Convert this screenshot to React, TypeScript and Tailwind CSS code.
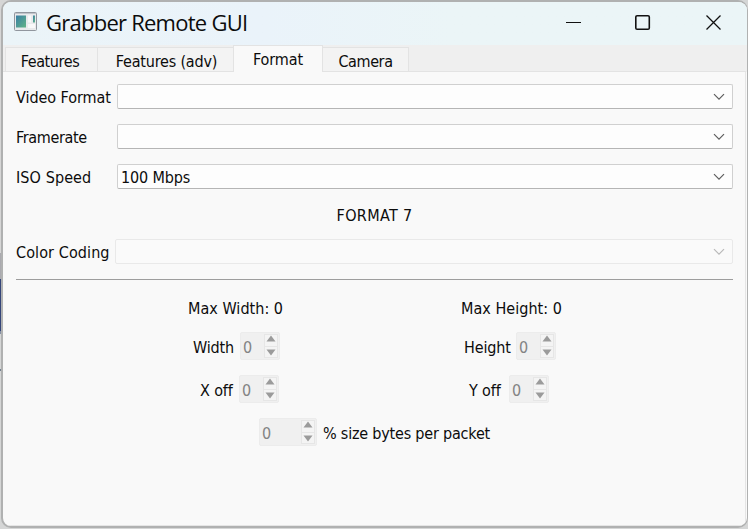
import React from "react";

function Chevron({ dim = false }: { dim?: boolean }) {
  return (
    <svg width="12" height="8" viewBox="0 0 12 8" fill="none" stroke={dim ? "#b9b9b9" : "#5e5e5e"} strokeWidth="1.2">
      <path d="M1 1.2 6 6.2 11 1.2" />
    </svg>
  );
}

function Combo({ label, gap, spacing, value = "", dim = false }: { label: string; gap: string; spacing: string; value?: string; dim?: boolean }) {
  return (
    <div className="flex h-[25px] items-center">
      <span className={`${gap} ${spacing} shrink-0 pt-[2px]`}>{label}</span>
      <div className={`flex h-[25px] flex-1 items-center justify-between rounded-[2px] border pl-[3px] pr-[7px] ${dim ? "border-[#e9e9e9] bg-[#fafafa]" : "border-[#d0d0d0] border-b-[#b5b5b5] bg-[#fdfdfd]"}`}>
        <span className="pt-[2px] tracking-[-0.15px]">{value}</span>
        <Chevron dim={dim} />
      </div>
    </div>
  );
}

function Spin({ width = "w-[40px]" }: { width?: string }) {
  return (
    <div className={`${width} flex h-[28px] shrink-0 items-center justify-between rounded-[2px] border border-[#ececec] bg-[#f0f0f0] pl-[2px] pr-px text-[#838383]`}>
      <span className="pt-[4px]">0</span>
      <div className="flex h-[24px] w-[14px] flex-col border border-[#e6e6e6] bg-[#f4f4f4]">
        <div className="flex h-[12px] items-start justify-center border-b border-[#e6e6e6]">
          <svg width="10" height="7" viewBox="0 0 10 7" fill="#9b9b9b" className="-ml-px shrink-0"><path d="M.5 6.5 5 .5 9.5 6.5z" /></svg>
        </div>
        <div className="flex h-[10px] items-center justify-center">
          <svg width="10" height="7" viewBox="0 0 10 7" fill="#9b9b9b" className="-ml-px shrink-0"><path d="M.5.5h9L5 6.5z" /></svg>
        </div>
      </div>
    </div>
  );
}

export default function App() {
  return (
    <div className="flex h-[529px] w-[748px] overflow-hidden bg-[#d5d6d6] font-['DejaVu_Sans_Condensed','DejaVu_Sans','Noto_Sans',sans-serif] text-[16px] leading-[20px] whitespace-nowrap text-[#0c0c0c] [font-stretch:condensed]">
      <div className="flex w-px shrink-0 flex-col">
        <div className="h-[253px] bg-[#d6d6d6]" />
        <div className="h-[26px] bg-[#aaaaaf]" />
        <div className="h-[52px] bg-[#344579]" />
        <div className="h-[3px] bg-[#8590a4]" />
        <div className="h-[35px] bg-[#d5d6d6]" />
        <div className="h-[2px] bg-[#75818e]" />
      </div>
      <div className="flex h-[528px] w-[747px] shrink-0 flex-col overflow-hidden rounded-[10px] border-2 border-r-1 border-[#b0b1b1] bg-[#f9f9f9]">
        <header className="flex h-[43px] shrink-0 items-center bg-linear-to-r from-[#ebf4f8] via-[#eaf3fa] via-35% to-[#ebf5f7] to-60% pl-[11px]">
          <svg width="23" height="19" viewBox="0 0 23 19" className="mr-[9px] mb-[4px]">
            <defs>
              <linearGradient id="pane" x1="0" y1="0" x2="1" y2="1"><stop stopColor="#397fa5" /><stop offset="1" stopColor="#62b486" /></linearGradient>
            </defs>
            <rect x=".5" y=".5" width="22" height="18" rx="1" fill="#e9eaec" stroke="#91969e" />
            <path d="M1 1.5h21" stroke="#c0c4ca" />
            <path d="M2 3.5h10v12H2z" fill="url(#pane)" />
            <path d="M14 3.5h3v7h-3zM14 12h7v4h-7z" fill="#f8f8f9" />
            <path d="M19 3.5h2v7h-2z" fill="url(#pane)" />
          </svg>
          <h1 className="flex-1 pb-[3px] font-['Open_Sans','Noto_Sans',sans-serif] text-[22px] leading-[30px] tracking-[-0.75px] [font-stretch:normal]">Grabber Remote GUI</h1>
          <svg width="156" height="17" viewBox="0 0 156 17" fill="none" stroke="#111" strokeWidth="1.3" className="mr-[25px] mb-[3px]">
            <path d="M0 8.5h15" strokeWidth="1" />
            <rect x="69.8" y="1.8" width="13.5" height="13.5" rx="1.3" strokeWidth="1.6" />
            <path d="m140.5 1.5 14 14m0-14-14 14" />
          </svg>
        </header>
        <nav className="flex h-[27px] shrink-0 items-end border-t border-[#efefef] bg-[#efefef] pr-px">
          <div className="h-full w-[2px] border-b border-[#e3e3e3]" />
          <div className="flex h-[25px] w-[92px] items-center justify-center border border-r-0 border-[#e3e3e3] bg-[#f3f3f3] pt-[4px] pr-[3px] tracking-[-0.4px]">Features</div>
          <div className="flex h-[25px] w-[136px] items-center justify-center border border-r-0 border-[#e3e3e3] bg-[#f3f3f3] pt-[4px] pl-[2px] tracking-[-0.2px]">Features (adv)</div>
          <div className="flex h-[27px] w-[90px] items-center justify-center border-x border-t border-[#e3e3e3] bg-[#f9f9f9] pt-px tracking-[-0.1px]">Format</div>
          <div className="flex h-[25px] w-[86px] items-center justify-center border border-l-0 border-[#e3e3e3] bg-[#f3f3f3] pt-[4px] tracking-[-0.4px]">Camera</div>
          <div className="h-full flex-1 border-b border-[#e3e3e3]" />
        </nav>
        <main className="mr-px flex flex-1 flex-col border-r border-b border-[#e5e5e5] pt-[12px] pr-[12px] pl-[13px]">
          <div className="flex flex-col gap-[15px]">
            <Combo label="Video Format" gap="w-[101px]" spacing="tracking-[-0.05px]" />
            <Combo label="Framerate" gap="w-[101px]" spacing="tracking-[-0.35px]" />
            <Combo label="ISO Speed" gap="w-[101px]" spacing="tracking-[0.1px]" value="100 Mbps" />
          </div>
          <div className="mt-[17px] mb-[13px] text-center tracking-[0.35px]">FORMAT 7</div>
          <Combo label="Color Coding" gap="w-[99px]" spacing="tracking-[0.1px]" dim />
          <div className="mt-[15px] h-px bg-[#9d9d9d]" />
          <div className="mt-[19px] flex tracking-[0.03px]">
            <div className="w-[445px] pl-[172px]">Max Width: 0</div>
            <div>Max Height: 0</div>
          </div>
          <div className="mt-[13px] flex items-center tracking-[-0.15px]">
            <span className="w-[224px] pt-[3px] pl-[177px]">Width</span><Spin />
            <span className="ml-[184px] w-[52px] pt-[3px]">Height</span><Spin />
          </div>
          <div className="mt-[15px] flex items-center tracking-[-0.15px]">
            <span className="w-[223px] pt-[4px] pl-[184px]">X off</span><Spin />
            <span className="ml-[190px] w-[40px] pt-[4px]">Y off</span><Spin />
          </div>
          <div className="mt-[15px] flex items-center pl-[243px] tracking-[-0.2px]">
            <Spin width="w-[58px]" />
            <span className="ml-[6px] pt-[3px]">% size bytes per packet</span>
          </div>
        </main>
      </div>
    </div>
  );
}
